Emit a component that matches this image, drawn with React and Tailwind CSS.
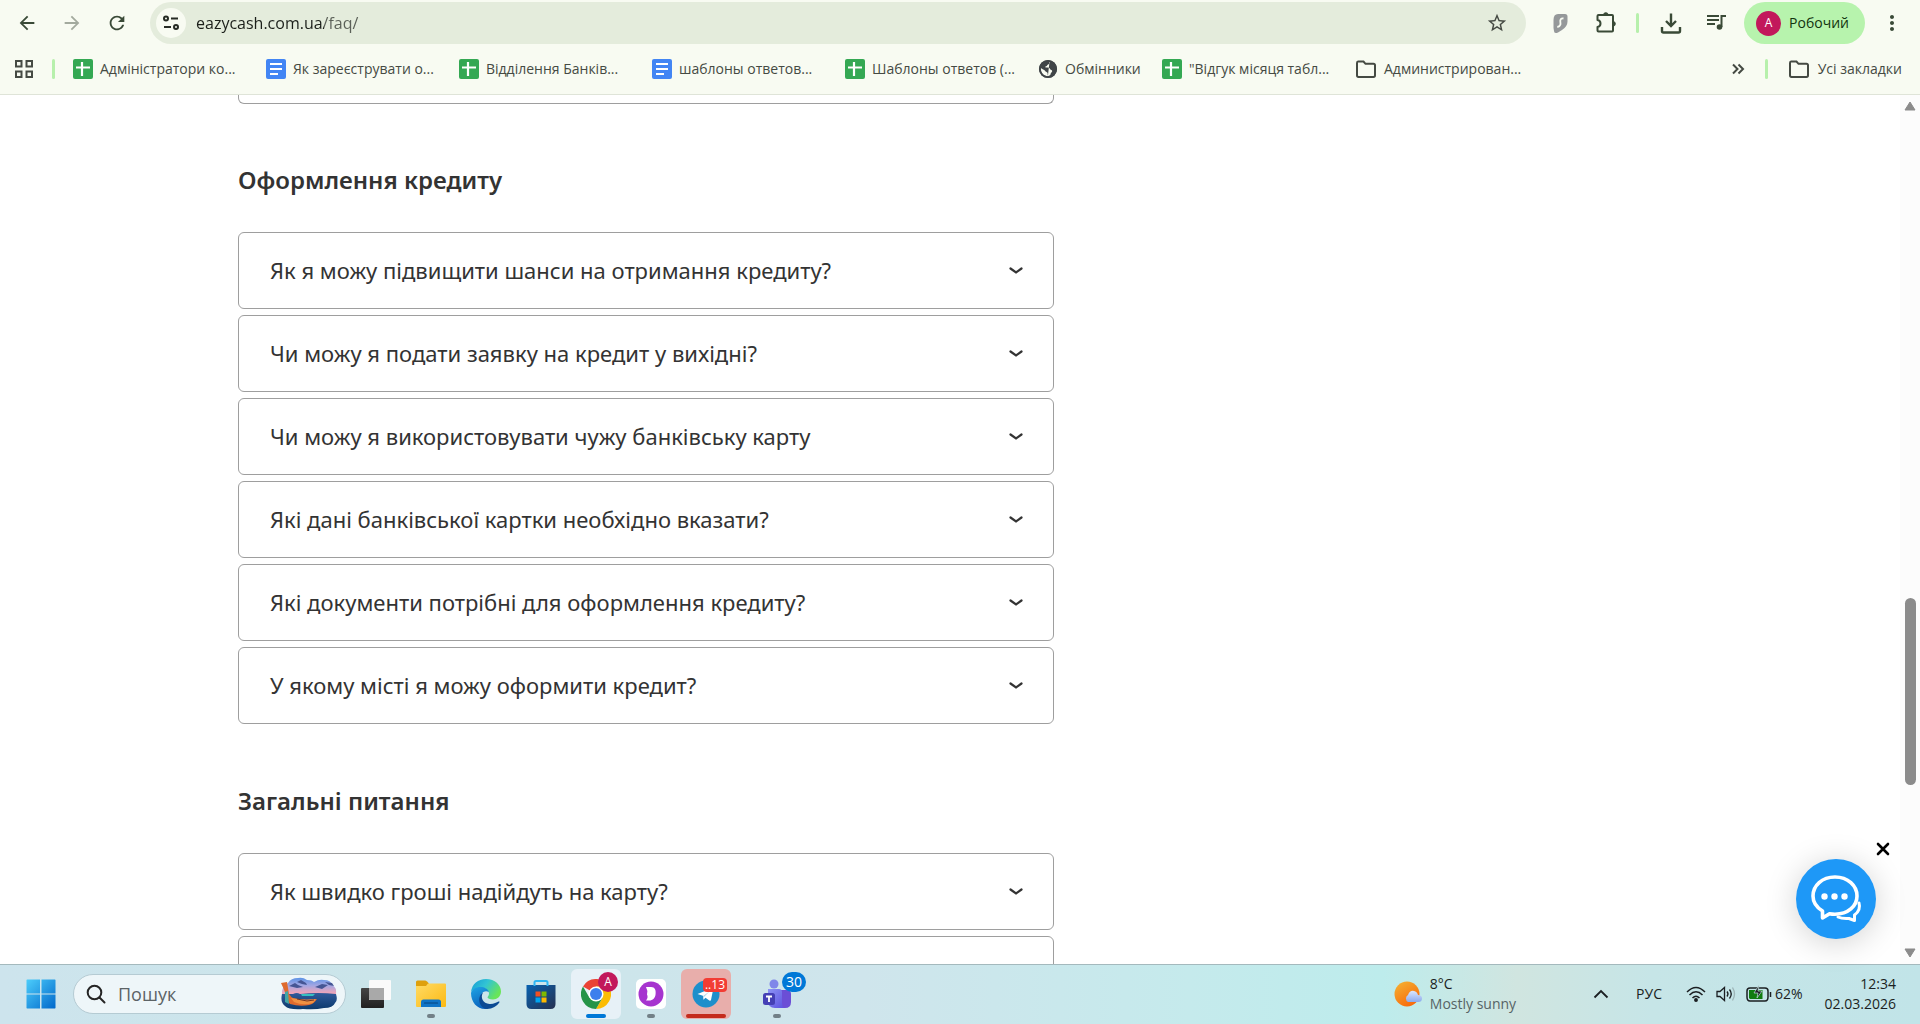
import {
  MdArrowBack,
  MdArrowForward,
  MdRefresh,
  MdStarBorder,
  MdMoreVert,
} from "react-icons/md";

const bookmarks = [
  { icon: "sheet", title: "Адміністратори ко..." },
  { icon: "doc", title: "Як зареєструвати о..." },
  { icon: "sheet", title: "Відділення Банків..." },
  { icon: "doc", title: "шаблоны ответов..." },
  { icon: "sheet", title: "Шаблоны ответов (..." },
  { icon: "globe", title: "Обмінники", short: true },
  { icon: "sheet", title: "\"Відгук місяця табл..." },
  { icon: "folder", title: "Администрирован..." },
];

const creditQuestions = [
  "Як я можу підвищити шанси на отримання кредиту?",
  "Чи можу я подати заявку на кредит у вихідні?",
  "Чи можу я використовувати чужу банківську карту",
  "Які дані банківської картки необхідно вказати?",
  "Які документи потрібні для оформлення кредиту?",
  "У якому місті я можу оформити кредит?",
];

const SheetIcon = () => (
  <svg viewBox="0 0 20 20" className="size-5 shrink-0">
    <rect width="20" height="20" rx="2" fill="#34a853" />
    <path d="M3 8.5h14M9 3v14" stroke="#fff" strokeWidth="2.2" />
  </svg>
);

const DocIcon = () => (
  <svg viewBox="0 0 20 20" className="size-5 shrink-0">
    <rect width="20" height="20" rx="2" fill="#4285f4" />
    <path d="M4 5h12M4 10h12M4 15h8" stroke="#fff" strokeWidth="2" />
  </svg>
);

const GlobeIcon = () => (
  <svg viewBox="0 0 20 20" className="size-5 shrink-0">
    <circle cx="10" cy="10" r="9" fill="#404548" />
    <path
      d="M11.5 2.800c1 1.200.2 2.200-1 2.400-1.500.3-1 1.800-2.500 2-1 .2-.8 1.300.2 1.400 1.800.2 3.300-.2 3.800 1.400.3 1.200 2.200.6 2.200 2 0 1.300-1.400 1.500-1.600 3-.1 1-.9 1.800-2.600 2-.8-1 .2-2.400-.8-3.400S7 12.500 6.600 11.200C5.500 10.500 4 9.800 2.800 9c0 5 3 8.200 7.200 8.200 0 0-.2-.8 0-1.200"
      fill="#f9fcf2"
    />
    <circle cx="10" cy="10" r="8.200" fill="none" stroke="#404548" strokeWidth="1.800" />
  </svg>
);

const FolderIcon = () => (
  <svg viewBox="0 0 22 20" className="h-5 w-[22px] shrink-0">
    <path
      d="M2.500 2.500h6l2 2.300h8q1.500 0 1.500 1.500v10q0 1.700-1.500 1.700h-15q-1.500 0-1.500-1.700v-12.300q0-1.500 1-1.500z"
      fill="none"
      stroke="#454a43"
      strokeWidth="2"
    />
  </svg>
);

const bookmarkIcons = {
  sheet: SheetIcon,
  doc: DocIcon,
  globe: GlobeIcon,
  folder: FolderIcon,
};

const Bookmark = ({ icon, title, short }) => {
  const Icon = bookmarkIcons[icon];

  return (
    <a
      href="#"
      className={`flex shrink-0 items-center gap-[7px] ${short ? "w-[124px]" : "w-[193px]"}`}
    >
      <Icon />
      <span className="whitespace-nowrap">{title}</span>
    </a>
  );
};

const Toolbar = () => (
  <div className="flex h-[46px] items-center text-[#3a4a37]">
    <div className="flex w-[150px] shrink-0 items-center gap-[23px] pl-4">
      <button aria-label="Назад">
        <MdArrowBack className="size-[22px]" />
      </button>
      <button aria-label="Вперед" className="text-[#a3aa9e]">
        <MdArrowForward className="size-[22px]" />
      </button>
      <button aria-label="Оновити">
        <MdRefresh className="size-[22px]" />
      </button>
    </div>
    <div className="flex h-[42px] flex-1 items-center rounded-full bg-[#e4ecdc] pr-[18px] pl-[6px]">
      <button
        aria-label="Про сайт"
        className="flex size-[30px] shrink-0 items-center justify-center rounded-full bg-[#f8fbf2]"
      >
        <svg viewBox="0 0 18 18" className="size-[18px]" fill="none" stroke="#262b24" strokeWidth="2">
          <circle cx="4" cy="4.500" r="2" />
          <path d="M9 4.500h7M2 13h7" />
          <circle cx="14" cy="13" r="2" />
        </svg>
      </button>
      <input
        aria-label="Адреса"
        defaultValue="eazycash.com.ua/faq/"
        className="ml-[10px] min-w-0 flex-1 bg-[linear-gradient(90deg,#1b1f1a_128px,#5b6058_128px)] bg-clip-text text-base text-transparent outline-none"
      />
      <button aria-label="Додати закладку" className="text-[#454a43]">
        <MdStarBorder className="size-[22px]" />
      </button>
    </div>
    <div className="flex shrink-0 items-center pr-4">
      <button aria-label="Surfshark" className="ml-[26px]">
        <svg viewBox="0 0 16 20" className="h-5 w-4">
          <path d="M6 1h7q2.500 0 2.500 2.500v5q0 5-5.500 8.500l-4 2.500q-4 1.500-4-1.500L1.500 15V7Q1.500 1 6 1z" fill="#95989a" />
          <path d="M11.500 5.500C9 5 8 6.500 8.300 8.500s.8 5-3 5.500" fill="none" stroke="#f8fbf2" strokeWidth="1.800" />
        </svg>
      </button>
      <button aria-label="Розширення" className="ml-[26px]">
        <svg viewBox="0 0 24 24" className="size-6" fill="none" stroke="#3a4a37" strokeWidth="2" strokeLinejoin="round">
          <path d="M4.500 4H18q1 0 1 1v14.500q0 1-1 1H4.500q-1 0-1-1V16q3-.5 3-3.500t-3-3.500V5q0-1 1-1z" />
          <path d="M9.500 4a2.300 2.300 0 0 1 4.600 0zM19 10.500a2.300 2.300 0 0 1 0 4.600z" fill="#3a4a37" strokeWidth="1" />
        </svg>
      </button>
      <span className="ml-[18px] h-5 w-[3px] rounded-full bg-[#b7f0ac]" />
      <button aria-label="Завантаження" className="ml-5">
        <svg viewBox="0 0 24 24" className="size-6" fill="none" stroke="#3a4a37" strokeWidth="2.400">
          <path d="M12 2.500v12M7 10l5 5 5-5M3 16v4q0 1.500 1.500 1.500h15q1.500 0 1.500-1.500v-4" />
        </svg>
      </button>
      <button aria-label="Музика" className="ml-[22px]">
        <svg viewBox="0 0 24 24" className="size-6" fill="none" stroke="#3a4a37" strokeWidth="2">
          <path d="M2 5h12M2 9h12M2 13h8M16.500 16V5H21" />
          <circle cx="14.500" cy="16" r="2.800" fill="#3a4a37" strokeWidth="0" />
        </svg>
      </button>
      <button className="ml-[15px] flex h-[42px] items-center gap-2 rounded-full bg-[#b7f3ad] pr-4 pl-3 text-sm text-[#12330f]">
        <span className="flex size-[25px] items-center justify-center rounded-full bg-[#c2185b] text-xs text-white">
          A
        </span>
        Робочий
      </button>
      <button aria-label="Меню" className="ml-[15px]">
        <MdMoreVert className="size-6" />
      </button>
    </div>
  </div>
);

const BookmarkBar = () => (
  <nav className="flex h-[46px] items-center justify-between pr-[18px] pl-[14px] text-sm text-[#454a43]">
    <div className="flex min-w-0 items-center overflow-hidden">
      <button aria-label="Програми">
        <svg viewBox="0 0 20 20" className="size-5" fill="none" stroke="#454a43" strokeWidth="2">
          <path d="M2 2h5.500v5.500H2zM12.500 2H18v5.500h-5.500zM2 12.500h5.500V18H2zM12.500 12.500H18V18h-5.500z" />
        </svg>
      </button>
      <span className="mx-[18px] h-5 w-[3px] shrink-0 rounded-full bg-[#b7f0ac]" />
      {bookmarks.map((bookmark) => (
        <Bookmark key={bookmark.title} {...bookmark} />
      ))}
    </div>
    <div className="flex shrink-0 items-center">
      <button aria-label="Інші закладки">
        <svg viewBox="0 0 14 12" className="h-3 w-[14px]" fill="none" stroke="#454a43" strokeWidth="2">
          <path d="M2 1.500L6.500 6 2 10.500M7.500 1.500L12 6l-4.500 4.500" />
        </svg>
      </button>
      <span className="mx-5 h-5 w-[3px] rounded-full bg-[#b7f0ac]" />
      <a href="#" className="flex items-center gap-2">
        <FolderIcon />
        Усі закладки
      </a>
    </div>
  </nav>
);

const Question = ({ children }) => (
  <button
    aria-expanded="false"
    className="flex h-[77px] w-full shrink-0 items-center justify-between rounded-md border border-[#9e9e9e] pr-[30px] pl-[31px] text-left text-[22px] text-[#333]"
  >
    {children}
    <svg viewBox="0 0 14 8" className="h-2 w-[14px] shrink-0" fill="none" stroke="#333" strokeWidth="2.200">
      <path d="M1.500 1.500L7 5.500l5.500-4" strokeLinecap="round" />
    </svg>
  </button>
);

const Faq = () => (
  <main className="flex min-h-0 flex-1 flex-col overflow-hidden pl-[238px] font-['Noto_Sans','Open_Sans',sans-serif]">
    <div className="flex w-[816px] flex-col">
      <div className="h-[9px] shrink-0 rounded-b-md border border-t-0 border-[#9e9e9e]" />
      <h2 className="mt-[60px] text-2xl font-semibold text-[#333]">Оформлення кредиту</h2>
      <div className="mt-9 flex flex-col gap-[6px]">
        {creditQuestions.map((question) => (
          <Question key={question}>{question}</Question>
        ))}
      </div>
      <h2 className="mt-[61px] text-2xl font-semibold text-[#333]">Загальні питання</h2>
      <div className="mt-9 flex flex-col gap-[6px]">
        <Question>Як швидко гроші надійдуть на карту?</Question>
        <Question />
      </div>
    </div>
  </main>
);

const Scrollbar = () => (
  <div className="flex w-5 shrink-0 flex-col items-center bg-[#fcfcfc] py-[6px]">
    <svg viewBox="0 0 12 10" className="h-[10px] w-3 shrink-0">
      <path d="M6 1l5 8H1z" fill="#8b8b8b" stroke="#8b8b8b" strokeLinejoin="round" />
    </svg>
    <div className="flex-[487]" />
    <div className="w-[11px] flex-[187] rounded-full bg-[#8b8b8b]" />
    <div className="flex-[163]" />
    <svg viewBox="0 0 12 10" className="h-[10px] w-3 shrink-0">
      <path d="M6 9l5-8H1z" fill="#8b8b8b" stroke="#8b8b8b" strokeLinejoin="round" />
    </svg>
  </div>
);

const ChatWidget = () => (
  <div className="absolute right-[30px] bottom-[25px] flex flex-col items-end">
    <button aria-label="Закрити чат">
      <svg viewBox="0 0 14 14" className="size-[14px]" stroke="#000" strokeWidth="2.600" strokeLinecap="round">
        <path d="M2 2l10 10M12 2L2 12" />
      </svg>
    </button>
    <button
      aria-label="Чат"
      className="mt-[3px] mr-[14px] size-20 rounded-full bg-[#1e98f7] shadow-[0_4px_32px_rgba(0,0,0,0.18)]"
    >
      <svg viewBox="0 0 80 80" className="size-20" fill="none" stroke="#fff" strokeLinejoin="round">
        <path
          d="M39 18C26 18 17 26.500 17 37c0 6 3 11 9.500 15v7l7-4.300c2 .4 3.800.5 5.500.5 13 0 22-8 22-18.200S52 18 39 18z"
          strokeWidth="3.600"
        />
        <path
          d="M63 44c1.500 5-.5 9-4.500 12v5.500L53 59.500c-4 .3-8 0-11-1.500"
          strokeWidth="3"
          strokeLinecap="round"
        />
        <g fill="#fff" stroke="none">
          <circle cx="28.500" cy="37.500" r="3.200" />
          <circle cx="38.500" cy="37.500" r="3.200" />
          <circle cx="48.500" cy="37.500" r="3.200" />
        </g>
      </svg>
    </button>
  </div>
);

const StartIcon = () => (
  <svg viewBox="0 0 30 30" className="size-[30px]">
    <defs>
      <linearGradient id="start" x1="0" y1="0" x2="1" y2="1">
        <stop offset="0" stopColor="#4ccdfb" />
        <stop offset="1" stopColor="#0168cb" />
      </linearGradient>
    </defs>
    <path d="M1 .5h13v14H.5V1zM15.500.5h13.500l.5.500v13.500h-14zM.5 15.500H14v14H1l-.5-.5zM15.500 15.500h14V29l-.5.500H15.500z" fill="url(#start)" />
  </svg>
);

const BoatPicture = () => (
  <svg viewBox="0 0 58 33" className="h-[33px] w-[58px] shrink-0">
    <defs>
      <linearGradient id="sky" x1="0" y1="0" x2="0" y2="1">
        <stop offset="0" stopColor="#5b93e6" />
        <stop offset=".45" stopColor="#a3a6e2" />
        <stop offset=".9" stopColor="#f1a5b8" />
      </linearGradient>
      <linearGradient id="sea" x1="0" y1="0" x2="0" y2="1">
        <stop offset="0" stopColor="#315a9b" />
        <stop offset="1" stopColor="#0d3a6d" />
      </linearGradient>
    </defs>
    <path d="M3 18q-1-8 6-12 3-5 10-5 5-1 9 2 5 0 7 2 5-3 10-2 7 0 8 5 5 2 4 10z" fill="url(#sky)" />
    <path d="M10 9l6-3 3 2 5 2-6 1zM18 5l4-2 5 3 1 2-5-1zM36 10l7-3 6 1-6 4zM46 5l7 1 2 3-5-1z" fill="#455694" />
    <path d="M3 17h11q4-2 7 0 18-2 36 0 2 7-1 9-2 5-11 5-9 2-21 1-14 1-18-3-5-4-3-12z" fill="url(#sea)" />
    <path d="M22 17h14l-2 2H23z" fill="#36bfc1" />
    <path d="M2 6l6-1 2 12q2 3 4 4 11 3 24 1-3 5-8 6-9 2-19-1-2-2-4-9-2-6-5-12z" fill="#df6a2e" />
    <path d="M12 21q12 3 25 1l-3 4q-10 3-19-1z" fill="#f09142" />
    <path d="M6 15l3-1 1 13-4-2z" fill="#42a6a4" />
    <path d="M18 22l10 2 7-1" stroke="#733726" fill="none" />
  </svg>
);

const TaskViewIcon = () => (
  <svg viewBox="0 0 30 30" className="size-[30px]">
    <defs>
      <linearGradient id="tv" x1="0" y1="0" x2="0" y2="1">
        <stop stopColor="#454545" />
        <stop offset="1" stopColor="#202020" />
      </linearGradient>
    </defs>
    <rect y="9" width="23" height="20" rx="1" fill="url(#tv)" />
    <rect x="8" y="1" width="22" height="20" rx="1" fill="#fafafa" />
    <path d="M8 9h15v12H9l-1-1z" fill="#a9a9a9" />
  </svg>
);

const ExplorerIcon = () => (
  <svg viewBox="0 0 30 30" className="size-[30px]">
    <defs>
      <linearGradient id="fold" x1="0" y1="0" x2="1" y2="1">
        <stop stopColor="#ffdb65" />
        <stop offset="1" stopColor="#fcb913" />
      </linearGradient>
    </defs>
    <path d="M0 3q0-1.500 1.500-1.500H9q1 0 2 1l2 2v5H0z" fill="#dfa00c" />
    <path d="M0 7h10l2-2.500h17q1 0 1 1V27q0 1-1 1H1q-1 0-1-1z" fill="url(#fold)" />
    <path d="M5 28v-5q0-2.500 2.500-2.500h15Q25 20.500 25 23v5z" fill="#0f74c6" />
    <path d="M8.500 24h13" stroke="#07457f" strokeWidth="1.200" strokeLinecap="round" />
  </svg>
);

const EdgeIcon = () => (
  <svg viewBox="0 0 30 30" className="size-[30px]">
    <defs>
      <linearGradient id="edgeTop" x1="0" y1="0" x2="1" y2=".5">
        <stop stopColor="#159bd6" />
        <stop offset=".5" stopColor="#32c4d4" />
        <stop offset="1" stopColor="#69e558" />
      </linearGradient>
      <linearGradient id="edgeLeft" x1="0" y1="0" x2=".4" y2="1">
        <stop stopColor="#1fa5e5" />
        <stop offset="1" stopColor="#0a62bd" />
      </linearGradient>
    </defs>
    <path d="M0 13C1 5 7 0 15 0c9 0 15 6 15 12.500 0 5-4 8-8 8-3.500 0-5.500-1-5.500-2.200 0-.8 1.500-1.300 1.500-3.800 0-3-3-5.500-8-5.500-5 0-8.500 2-10 4z" fill="url(#edgeTop)" />
    <path d="M0 14c1-4 5-6 9.500-6 4 0 7.500 2 8.500 5-5-2.500-8 1.500-8 5 0 6 5 9.500 9 10.500C16 30 15 30 14 30 6 30 0 23 0 14z" fill="url(#edgeLeft)" />
    <path d="M12 13.500c-3 5 0 11 6.500 11.500 4 .3 7-1.500 9-2.500.8-.4 1.300.3.8 1C26 27 21.500 30 16 30 10 29.500 6.500 22 9 17c.7-1.600 1.700-2.700 3-3.500z" fill="#0c4a93" />
  </svg>
);

const StoreIcon = () => (
  <svg viewBox="0 0 30 30" className="size-[30px]">
    <defs>
      <linearGradient id="store" x1="0" y1="0" x2="1" y2="1">
        <stop stopColor="#0862b1" />
        <stop offset="1" stopColor="#25304f" />
      </linearGradient>
    </defs>
    <path d="M.5 6h29v19q0 5-5 5h-19q-5 0-5-5z" fill="url(#store)" />
    <path d="M8.500 7V3.500Q8.500 2 10 2h10q1.500 0 1.500 1.500V7" fill="none" stroke="#2eb6f3" strokeWidth="2" />
    <path d="M9.500 12.500h5v5h-5z" fill="#f25022" />
    <path d="M15.500 12.500h5v5h-5z" fill="#7fba00" />
    <path d="M9.500 18.500h5v5h-5z" fill="#00a4ef" />
    <path d="M15.500 18.500h5v5h-5z" fill="#ffb900" />
  </svg>
);

const ChromeIcon = () => (
  <svg viewBox="0 0 30 30" className="size-[30px]">
    <path d="M15 15L2 7.500A15 15 0 0 1 28 7.500H15z" fill="#ea4335" />
    <path d="M15 15L15 7.500h13A15 15 0 0 1 15 30l6.500-11.200z" fill="#fbbc04" />
    <path d="M15 15l6.500 3.800L15 30A15 15 0 0 1 2 7.500l6.500 11.300z" fill="#269447" />
    <circle cx="15" cy="15" r="7.500" fill="#fff" />
    <circle cx="15" cy="15" r="6" fill="#3d7fed" />
  </svg>
);

const DolphinIcon = () => (
  <svg viewBox="0 0 30 30" className="size-[30px]">
    <rect width="30" height="30" rx="5" fill="#fff" />
    <circle cx="15" cy="15" r="12.500" fill="#a634cf" />
    <path d="M10 8h5c4 0 5 3 4.600 7-.4 4-2.600 6.500-6.600 6.500h-3q2.500-3 1-6 1-4-1-7.500z" fill="#fff" />
  </svg>
);

const TelegramIcon = () => (
  <svg viewBox="0 0 30 30" className="size-[30px]">
    <circle cx="15" cy="15" r="13.500" fill="#1e8fcb" />
    <path d="M6.500 15L21.500 9q1-.3.800.8L20 21q-.4 1.300-1.700.5L14.500 18.700l-2 2-.6-3.900z" fill="#fff" />
    <path d="M12 17l7-5-6 6-.5 2.500z" fill="#b5dbee" />
  </svg>
);

const TeamsIcon = () => (
  <svg viewBox="0 0 30 30" className="size-[30px]">
    <defs>
      <linearGradient id="teams" x1="0" y1="0" x2="1" y2="1">
        <stop stopColor="#8d94f5" />
        <stop offset="1" stopColor="#5b50df" />
      </linearGradient>
    </defs>
    <circle cx="12" cy="5" r="4.500" fill="#7f86e9" />
    <path d="M18 11h7q4 0 4 4v8q0 6-6 6h-5z" fill="#6b4ed6" />
    <path d="M6 10h11q3 0 3 3v11q0 5 3 5H13q-7 0-7-7z" fill="url(#teams)" />
    <rect x="1" y="14" width="12" height="12" rx="2.500" fill="#4540b5" />
    <path d="M4 17.500h6M7 17.500v5.500" stroke="#fff" strokeWidth="1.800" />
  </svg>
);

const apps = [
  { name: "Представлення завдань", Icon: TaskViewIcon },
  { name: "Провідник", Icon: ExplorerIcon, open: true },
  { name: "Edge", Icon: EdgeIcon },
  { name: "Store", Icon: StoreIcon },
  { name: "Chrome", Icon: ChromeIcon, active: true },
  { name: "Dolphin", Icon: DolphinIcon, open: true },
  { name: "Telegram", Icon: TelegramIcon, alert: true },
  { name: "Teams", Icon: TeamsIcon, open: true },
];

const TaskbarApp = ({ name, Icon, open, active, alert }) => (
  <button
    aria-label={name}
    className={`relative flex h-[50px] w-[50px] items-center justify-center rounded-md ${active ? "bg-[#e7f1f7]" : ""} ${alert ? "bg-[#e8aeab]" : ""} ${name === "Teams" ? "ml-4" : ""}`}
  >
    <Icon />
    {open && <span className="absolute bottom-[1px] h-1 w-2 rounded-full bg-[#728087]" />}
    {active && <span className="absolute bottom-[1px] h-1 w-5 rounded-full bg-[#0078d7]" />}
    {alert && <span className="absolute bottom-[1px] h-1 w-10 rounded-full bg-[#c42b1c]" />}
    {active && (
      <span className="absolute top-[3px] right-[3px] flex size-5 items-center justify-center rounded-full bg-[#c2185b] text-xs text-white">
        A
      </span>
    )}
    {alert && (
      <span className="absolute top-[9px] right-1 flex h-[14px] items-center rounded bg-[#f23c34] px-[2px] text-xs text-white">
        ..13
      </span>
    )}
    {name === "Teams" && (
      <span className="absolute top-[3px] -right-1 flex h-5 w-6 items-center justify-center rounded-full bg-[#0078d7] text-sm text-white">
        30
      </span>
    )}
  </button>
);

const WeatherIcon = () => (
  <svg viewBox="0 0 28 28" className="size-7">
    <defs>
      <linearGradient id="sun" x1="0" y1="0" x2=".6" y2="1">
        <stop stopColor="#f4b534" />
        <stop offset="1" stopColor="#f86b0b" />
      </linearGradient>
      <linearGradient id="cloud" x1="0" y1="0" x2="0" y2="1">
        <stop stopColor="#dbe7fc" />
        <stop offset="1" stopColor="#8ba9ed" />
      </linearGradient>
    </defs>
    <circle cx="13" cy="14" r="12.500" fill="url(#sun)" />
    <path d="M14 22a4 4 0 0 1 0-7q2-5 6-4 3 .5 4 4 4 0 4 3.500T24 22z" fill="url(#cloud)" />
  </svg>
);

const Tray = () => (
  <div className="flex shrink-0 items-center pr-6 text-sm text-[#1b1f22]">
    <button className="flex items-center gap-2 text-left leading-5">
      <WeatherIcon />
      <span>
        8°C
        <br />
        <span className="text-[#566366]">Mostly sunny</span>
      </span>
    </button>
    <button aria-label="Приховані піктограми" className="ml-[77px]">
      <svg viewBox="0 0 16 10" className="h-[10px] w-4" fill="none" stroke="#1b1f22" strokeWidth="1.800">
        <path d="M1.500 8.500L8 2l6.500 6.500" />
      </svg>
    </button>
    <button className="ml-[27px]">РУС</button>
    <button className="ml-6 flex items-center" aria-label="Мережа, звук, батарея 62%">
      <svg viewBox="0 0 20 16" className="h-4 w-5" fill="none" stroke="#1b1f22" strokeWidth="1.500">
        <path d="M1 6q9-9 18 0M3.500 9q6.500-6.500 13 0M6.500 12q3.500-3.500 7 0" />
        <circle cx="10" cy="14" r="1.200" fill="#1b1f22" />
      </svg>
      <svg viewBox="0 0 20 16" className="ml-[10px] h-4 w-5" fill="none" stroke="#1b1f22" strokeWidth="1.300">
        <path d="M1 5.500h3L8.500 1.500v13L4 10.500H1zM11 5.500q2 2.500 0 5M13.500 3.500q3.500 4.500 0 9" />
        <path d="M16.500 1.500q4 6.500 0 13" stroke="#9db5b7" />
      </svg>
      <svg viewBox="0 0 26 18" className="ml-[10px] h-[18px] w-[26px]">
        <path d="M4 3h15q3 0 3 3v6q0 4-3 4H4q-3 0-3-4V6q0-3 3-3zM24.500 7v5" fill="none" stroke="#1b1f22" strokeWidth="1.500" />
        <path d="M3 5h13.500v9H4l-1-1z" fill="#107c10" />
        <path d="M13 0L8 8h4l-1 5 5-7h-4z" fill="#1b1f22" stroke="#c8e4e6" strokeWidth=".7" />
      </svg>
      <span className="ml-[3px]">62%</span>
    </button>
    <button className="ml-[22px] text-right leading-5">
      12:34
      <br />
      02.03.2026
    </button>
  </div>
);

const Taskbar = () => (
  <footer className="flex h-[60px] shrink-0 items-center justify-between border-t border-[#a4b9bd] bg-[linear-gradient(90deg,#cde4ed_0%,#cbe5ea_20%,#cfe5ec_45%,#c5eaec_62%,#bdecec_72%,#d0e5e0_79%,#c6e5e7_86%,#c1e4e8_100%)] pb-[2px]">
    <div className="flex items-center pl-[26px]">
      <button aria-label="Пуск">
        <StartIcon />
      </button>
      <label className="mr-[5px] ml-[17px] flex h-10 w-[273px] items-center rounded-full border border-[#b5cbd3] bg-[#eef6f9] pr-2 pl-3">
        <svg viewBox="0 0 20 20" className="size-5 shrink-0" fill="none" stroke="#252525" strokeWidth="2">
          <circle cx="8.500" cy="8.500" r="6.800" />
          <path d="M13.500 13.500l5 5" strokeLinecap="round" />
        </svg>
        <input
          type="search"
          aria-label="Пошук"
          placeholder="Пошук"
          className="ml-3 min-w-0 flex-1 text-lg outline-none placeholder:text-[#5c6366]"
        />
        <BoatPicture />
      </label>
      <div className="flex items-center gap-[5px]">
        {apps.map((app) => (
          <TaskbarApp key={app.name} {...app} />
        ))}
      </div>
    </div>
    <Tray />
  </footer>
);

export default function App() {
  return (
    <div className="flex h-screen flex-col overflow-hidden bg-white font-['Open_Sans','Noto_Sans',sans-serif]">
      <header className="h-[95px] shrink-0 border-b border-[#dfe4d8] bg-[#f8fbf2]">
        <Toolbar />
        <BookmarkBar />
      </header>
      <div className="relative flex min-h-0 flex-1">
        <Faq />
        <Scrollbar />
        <ChatWidget />
      </div>
      <Taskbar />
    </div>
  );
}
